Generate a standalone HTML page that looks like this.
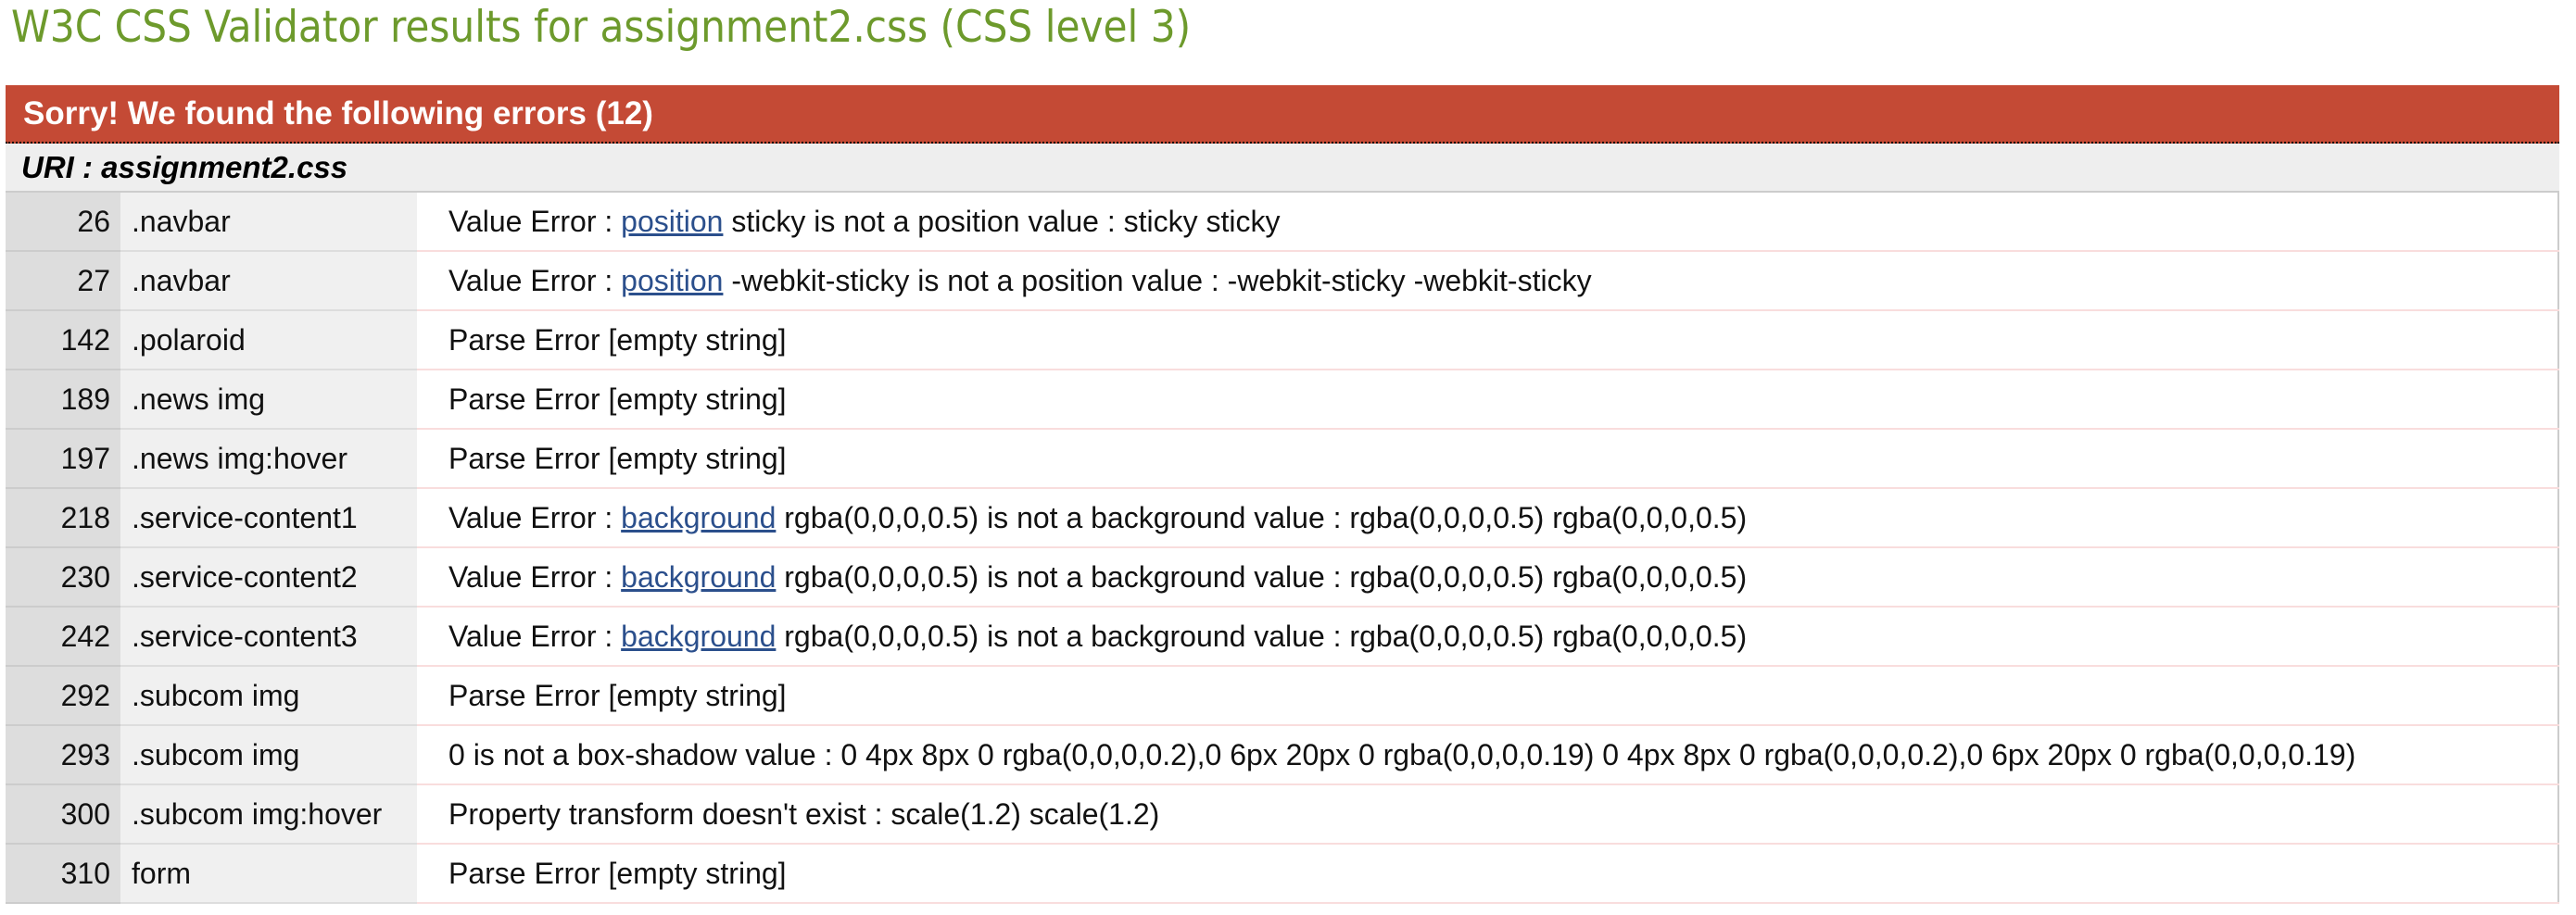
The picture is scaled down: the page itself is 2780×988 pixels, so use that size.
<!DOCTYPE html>
<html><head><meta charset="utf-8"><style>
body{margin:0;background:#fff;width:2780px;height:988px;overflow:hidden;font-family:"Liberation Sans",Arial,sans-serif}
h1{position:absolute;left:12px;top:2px;margin:0;font-family:"DejaVu Sans Condensed","DejaVu Sans",sans-serif;font-weight:normal;font-size:47px;color:#6d9a2c;white-space:nowrap}
.hdr{position:absolute;left:6px;top:92px;width:2756px;height:61px;background:#c44a35;border-bottom:2px dotted #000;color:#fff;font-weight:bold;font-size:35px;line-height:61px;text-indent:19px}
.uri{position:absolute;left:6px;top:155px;width:2756px;height:51px;background:#eee;border-bottom:2px solid #ccc;font-weight:bold;font-style:italic;font-size:33px;line-height:51px;text-indent:17px}
table{position:absolute;left:6px;top:208px;border-collapse:collapse;width:2756px;table-layout:fixed;font-size:32px;color:#111}
td{height:62px;padding:0;border-bottom:2px solid #ddd;white-space:nowrap;overflow:hidden}
td.n{width:124px;background:#ddd;text-align:right;padding-right:11px;box-sizing:border-box;border-bottom-color:#ccc}
td.s{width:320px;background:#f0f0f0;padding-left:12px;box-sizing:border-box}
td.m{background:#fff;padding-left:34px;border-bottom-color:#f9dddd;border-right:2px solid #ccc}
a{color:#2b4f8c;text-decoration:underline}
</style></head><body>
<h1>W3C CSS Validator results for assignment2.css (CSS level 3)</h1>
<div class="hdr">Sorry! We found the following errors (12)</div>
<div class="uri">URI : assignment2.css</div>
<table>
<colgroup><col style="width:124px"><col style="width:320px"><col></colgroup>
<tr><td class="n">26</td><td class="s">.navbar</td><td class="m">Value Error : <a>position</a> sticky is not a position value : sticky sticky</td></tr>
<tr><td class="n">27</td><td class="s">.navbar</td><td class="m">Value Error : <a>position</a> -webkit-sticky is not a position value : -webkit-sticky -webkit-sticky</td></tr>
<tr><td class="n">142</td><td class="s">.polaroid</td><td class="m">Parse Error [empty string]</td></tr>
<tr><td class="n">189</td><td class="s">.news img</td><td class="m">Parse Error [empty string]</td></tr>
<tr><td class="n">197</td><td class="s">.news img:hover</td><td class="m">Parse Error [empty string]</td></tr>
<tr><td class="n">218</td><td class="s">.service-content1</td><td class="m">Value Error : <a>background</a> rgba(0,0,0,0.5) is not a background value : rgba(0,0,0,0.5) rgba(0,0,0,0.5)</td></tr>
<tr><td class="n">230</td><td class="s">.service-content2</td><td class="m">Value Error : <a>background</a> rgba(0,0,0,0.5) is not a background value : rgba(0,0,0,0.5) rgba(0,0,0,0.5)</td></tr>
<tr><td class="n">242</td><td class="s">.service-content3</td><td class="m">Value Error : <a>background</a> rgba(0,0,0,0.5) is not a background value : rgba(0,0,0,0.5) rgba(0,0,0,0.5)</td></tr>
<tr><td class="n">292</td><td class="s">.subcom img</td><td class="m">Parse Error [empty string]</td></tr>
<tr><td class="n">293</td><td class="s">.subcom img</td><td class="m">0 is not a box-shadow value : 0 4px 8px 0 rgba(0,0,0,0.2),0 6px 20px 0 rgba(0,0,0,0.19) 0 4px 8px 0 rgba(0,0,0,0.2),0 6px 20px 0 rgba(0,0,0,0.19)</td></tr>
<tr><td class="n">300</td><td class="s">.subcom img:hover</td><td class="m">Property transform doesn't exist : scale(1.2) scale(1.2)</td></tr>
<tr><td class="n">310</td><td class="s">form</td><td class="m">Parse Error [empty string]</td></tr>
</table>
</body></html>
